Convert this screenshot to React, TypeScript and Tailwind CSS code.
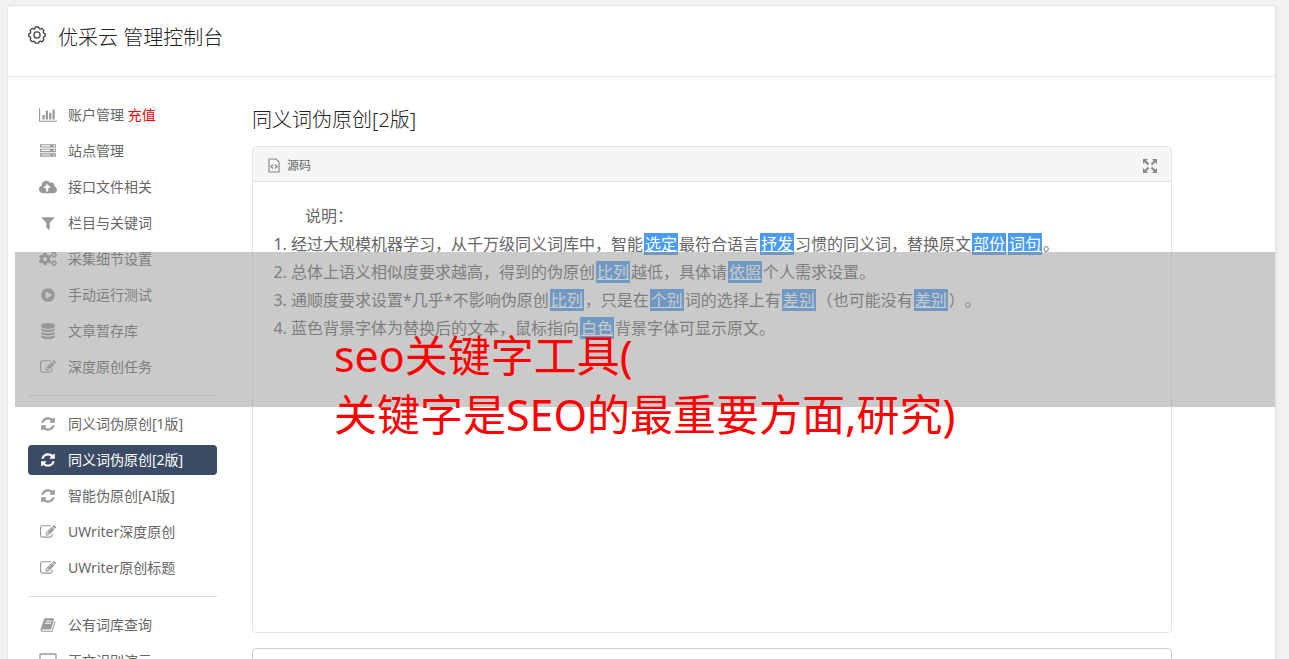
import type { ReactNode } from "react";
import { FaCloudUploadAlt, FaCogs } from "react-icons/fa";

type MenuItem = {
  label: string;
  icon: ReactNode;
  badge?: string;
  active?: boolean;
};

function Glyph({ d, wide }: { d: string; wide?: boolean }) {
  return (
    <svg
      viewBox={wide ? "0 0 2048 1792" : "0 0 1792 1792"}
      fill="currentColor"
      className={wide ? "h-4 w-[18px]" : "size-4"}
      aria-hidden="true"
    >
      <path d={d} />
    </svg>
  );
}

const refresh = (
  <Glyph d="M1639 1056q0 5-1 7-64 268-268 434.5T892 1664q-146 0-282.5-55T366 1452l-129 129q-19 19-45 19t-45-19-19-45v-448q0-26 19-45t45-19h448q26 0 45 19t19 45-19 45l-137 137q71 66 161 102t187 36q134 0 250-65t186-179q11-17 53-117 8-23 30-23h192q13 0 22.5 9.5t9.5 22.5zm25-800v448q0 26-19 45t-45 19h-448q-26 0-45-19t-19-45 19-45l138-138Q1078 384 896 384q-134 0-250 65T460 628q-11 17-53 117-8 23-30 23H178q-13 0-22.5-9.5T146 736v-7q65-268 270-434.5T896 128q146 0 284 55.5T1425 340l130-129q19-19 45-19t45 19 19 45z" />
);

const edit = (
  <Glyph d="M888 1184l116-116-152-152-116 116v56h96v96h56zm440-720q-16-16-33 1L945 815q-17 17-1 33t33-1l350-350q17-17 1-33zm80 594v190q0 119-84.5 203.5T1120 1536H288q-119 0-203.5-84.5T0 1248V416q0-119 84.5-203.5T288 128h832q63 0 117 25 15 7 18 23 3 17-9 29l-49 49q-14 14-32 8-23-6-45-6H288q-66 0-113 47t-47 113v832q0 66 47 113t113 47h832q66 0 113-47t47-113v-126q0-13 9-22l64-64q15-15 35-7t20 29zm-96-738l288 288-672 672H640V992zm444 132l-92 92-288-288 92-92q28-28 68-28t68 28l152 152q28 28 28 68t-28 68z" />
);

const menuGroups: MenuItem[][] = [
  [
    {
      label: "账户管理",
      badge: "充值",
      icon: (
        <Glyph
          wide
          d="M640 896v512H384V896h256zm384-512v1024H768V384h256zm1024 1152v128H0V128h128v1408h1920zm-640-896v768h-256V640h256zm384-384v1152h-256V256h256z"
        />
      ),
    },
    {
      label: "站点管理",
      icon: (
        <Glyph d="M128 1408h1024v-128H128v128zm0-512h1024V768H128v128zm1568 448q0-40-28-68t-68-28-68 28-28 68 28 68 68 28 68-28 28-68zM128 384h1024V256H128v128zm1568 448q0-40-28-68t-68-28-68 28-28 68 28 68 68 28 68-28 28-68zm0-512q0-40-28-68t-68-28-68 28-28 68 28 68 68 28 68-28 28-68zm96 832v384H0v-384h1792zm0-512v384H0V640h1792zm0-512v384H0V128h1792z" />
      ),
    },
    { label: "接口文件相关", icon: <FaCloudUploadAlt className="size-[18px]" /> },
    {
      label: "栏目与关键词",
      icon: (
        <Glyph d="M1595 295q17 41-14 70l-493 493v742q0 42-39 59-13 5-25 5-27 0-45-19l-256-256q-19-19-19-45V858L211 365q-31-29-14-70 17-39 59-39h1280q42 0 59 39z" />
      ),
    },
    { label: "采集细节设置", icon: <FaCogs className="size-[18px]" /> },
    {
      label: "手动运行测试",
      icon: (
        <Glyph d="M896 128q209 0 385.5 103T1561 510.5 1664 896t-103 385.5-279.5 279.5T896 1664t-385.5-103T231 1281.5 128 896t103-385.5T510.5 231 896 128zm384 823q32-18 32-55t-32-55L736 521q-31-19-64-1-32 19-32 56v640q0 37 32 56 16 8 32 8 17 0 32-9z" />
      ),
    },
    {
      label: "文章暂存库",
      icon: (
        <Glyph d="M896 768q237 0 443-43t325-127v170q0 69-103 128t-280 93.5-385 34.5-385-34.5T231 896 128 768V598q119 84 325 127t443 43zm0 768q237 0 443-43t325-127v170q0 69-103 128t-280 93.5-385 34.5-385-34.5-280-93.5-103-128v-170q119 84 325 127t443 43zm0-384q237 0 443-43t325-127v170q0 69-103 128t-280 93.5-385 34.5-385-34.5-280-93.5-103-128V982q119 84 325 127t443 43zM896 0q208 0 385 34.5t280 93.5 103 128v128q0 69-103 128t-280 93.5T896 640t-385-34.5T231 512 128 384V256q0-69 103-128t280-93.5T896 0z" />
      ),
    },
    { label: "深度原创任务", icon: edit },
  ],
  [
    { label: "同义词伪原创[1版]", icon: refresh },
    { label: "同义词伪原创[2版]", icon: refresh, active: true },
    { label: "智能伪原创[AI版]", icon: refresh },
    { label: "UWriter深度原创", icon: edit },
    { label: "UWriter原创标题", icon: edit },
  ],
  [
    {
      label: "公有词库查询",
      icon: (
        <Glyph d="M1703 478q40 57 18 129l-275 906q-19 64-76.5 107.5T1247 1664H324q-77 0-148.5-53.5T76 1479q-24-67-2-127 0-4 3-27t4-37q1-8-3-21.5t-3-19.5q2-11 8-21t16.5-23.5T116 1179q23-38 45-91.5t30-91.5q3-10 .5-30t-.5-28q3-11 17-28t17-23q21-36 42-92t25-90q1-9-2.5-32t.5-28q4-13 22-30.5t22-22.5q19-26 42.5-84.5T404 411q1-8-3-25.5t-2-26.5q2-8 9-18t18-23 17-21q8-12 16.5-30.5t15-35 16-36 19.5-32T533.5 140t36-11.5T617 134l-1 3q38-9 51-9h761q74 0 114 56t18 130l-274 906q-36 119-71.5 153.5T1086 1408H217q-27 0-38 15-11 16-1 43 24 70 144 70h923q29 0 56-15.5t35-41.5l300-987q7-22 5-57 38 15 59 43zm-1064 2q-4 13 2 22.5t20 9.5h608q13 0 25.5-9.5T1311 480l21-64q4-13-2-22.5t-20-9.5H702q-13 0-25.5 9.5T660 416zm-83 256q-4 13 2 22.5t20 9.5h608q13 0 25.5-9.5T1228 736l21-64q4-13-2-22.5t-20-9.5H619q-13 0-25.5 9.5T577 672z" />
      ),
    },
    {
      label: "正文识别演示",
      icon: (
        <svg viewBox="0 0 18 16" className="h-4 w-[18px]" fill="none" stroke="currentColor" aria-hidden="true">
          <rect x="1" y="1" width="16" height="11" rx="1" strokeWidth="1.3" />
          <path d="M5 15h8M9 12v3" strokeWidth="1.5" />
        </svg>
      ),
    },
  ],
];

// "[词]" marks a replaced word
const notes = [
  "经过大规模机器学习，从千万级同义词库中，智能[选定]最符合语言[抒发]习惯的同义词，替换原文[部份][词句]。",
  "总体上语义相似度要求越高，得到的伪原创[比列]越低，具体请[依照]个人需求设置。",
  "通顺度要求设置*几乎*不影响伪原创[比列]，只是在[个别]词的选择上有[差别]（也可能没有[差别]）。",
  "蓝色背景字体为替换后的文本，鼠标指向[白色]背景字体可显示原文。",
];

function Note({ text }: { text: string }) {
  const parts = text.split(/\[(.+?)\]/);

  return (
    <li>
      {parts.map((part, index) =>
        index % 2 === 1 ? (
          <span key={index} className="mx-px bg-[#499cf2] px-px text-white underline">
            {part}
          </span>
        ) : (
          part
        ),
      )}
    </li>
  );
}

function GearIcon() {
  // ring of shallow bumps around a small hub
  return (
    <svg
      viewBox="0 0 18 18"
      className="size-[18px]"
      fill="none"
      stroke="#444"
      strokeWidth="1.3"
      strokeLinejoin="round"
      aria-hidden="true"
    >
      <path d="M7.4 1h3.2l.6 1.7 1 .4 1.700-.7 2 2-.7 1.600.4 1.100 1.600.7v2.600l-1.600.7-.4 1.100.7 1.600-2 2-1.700-.7-1 .4-.6 1.700H7.400l-.6-1.700-1-.4-1.700.7-2-2 .7-1.600-.4-1.100-1.600-.7V7.800l1.600-.7.4-1.100-.7-1.600 2-2 1.700.7 1-.4z" />
      <circle cx="9" cy="9" r="3.100" />
    </svg>
  );
}

function SourceIcon() {
  return (
    <svg viewBox="0 0 12 15" className="h-[15px] w-3" fill="none" stroke="#888" aria-hidden="true">
      <path d="M1 1h7l3 3v10H1z" fill="#fafafa" strokeWidth="1.2" />
      <path d="M5 6.500 3 8.500l2 2M7 6.500l2 2-2 2" strokeWidth="1.3" />
    </svg>
  );
}

function ExpandIcon() {
  return (
    <svg viewBox="0 0 14 14" className="size-3.5" fill="#888" stroke="#888" aria-hidden="true">
      <path stroke="none" d="M0 0h5L0 5zM14 0v5L9 0zM0 14V9l5 5zM14 14H9l5-5z" />
      <path strokeWidth="2" d="m1.500 1.500 4 4M12.500 1.500l-4 4M1.500 12.500l4-4M12.500 12.500l-4-4" />
    </svg>
  );
}

export default function App() {
  return (
    <div className="relative h-screen overflow-hidden bg-[#f1f1f1] px-[7px] pt-[5px] font-['Noto_Sans','Noto_Sans_CJK_SC',sans-serif] text-[#666] [text-spacing-trim:space-all]">
      <div className="mr-[5px] min-h-full rounded-t-[4px] border border-r-2 border-[#e5e5e5] bg-white">
        <header className="flex h-[71px] items-start gap-3 border-b border-[#e5e5e5] px-5 pt-4 text-[#222]">
          <span className="flex h-[26px] items-center">
            <GearIcon />
          </span>
          <h1 className="text-xl leading-8 font-light">优采云 管理控制台</h1>
        </header>

        <div className="flex items-start gap-[35px] pt-[23px] pr-[103px] pl-5">
          <nav className="w-[189px] shrink-0 text-sm">
            {menuGroups.map((group, groupIndex) => (
              <ul
                key={groupIndex}
                className="mt-[13px] flex flex-col gap-1.5 border-t border-[#ddd] pt-[13px] first:mt-0 first:border-t-0 first:pt-0"
              >
                {group.map((item) => (
                  <li key={item.label}>
                    <a
                      href="#"
                      className={`flex h-[30px] items-center gap-2.5 rounded-[4px] px-2.5 ${
                        item.active ? "bg-[#3b4b66] text-white" : "text-[#666]"
                      }`}
                    >
                      <span
                        className={`flex w-5 shrink-0 justify-center ${
                          item.active ? "text-white" : "text-[#999]"
                        }`}
                      >
                        {item.icon}
                      </span>
                      <span className="whitespace-nowrap">
                        {item.label}
                        {item.badge ? <span className="text-[#f00]"> {item.badge}</span> : null}
                      </span>
                    </a>
                  </li>
                ))}
              </ul>
            ))}
          </nav>

          <main className="min-w-0 flex-1">
            <h2 className="mb-1.5 text-xl leading-10 font-light text-[#222]">同义词伪原创[2版]</h2>
            <section className="overflow-hidden rounded-[4px] border border-[#e5e5e5]">
              <div className="flex h-[35px] items-center justify-between border-b border-[#e5e5e5] bg-[#f5f5f5] pt-[3px] pr-3.5 pl-[15px]">
                <button type="button" className="flex items-center gap-[7px] text-xs">
                  <SourceIcon />
                  源码
                </button>
                <button type="button" aria-label="全屏">
                  <ExpandIcon />
                </button>
              </div>
              <div className="min-h-[450px] p-5 text-base leading-7">
                <p className="indent-8">说明：</p>
                <ol className="list-decimal pl-[18px]">
                  {notes.map((note) => (
                    <Note key={note} text={note} />
                  ))}
                </ol>
              </div>
            </section>
            <textarea
              aria-label="原文"
              className="mt-[15px] block h-40 w-full resize-none rounded-[4px] border border-[#ccc] bg-white"
            />
          </main>
        </div>
      </div>

      <div className="pointer-events-none absolute top-[252px] right-3.5 left-[15px] h-[155px] bg-[#969696]/50 pt-[74px] pl-[319px] text-[43px] leading-[59px] whitespace-nowrap text-[#f00]">
        <p>seo关键字工具(</p>
        <p>关键字是SEO的最重要方面,研究)</p>
      </div>
    </div>
  );
}
